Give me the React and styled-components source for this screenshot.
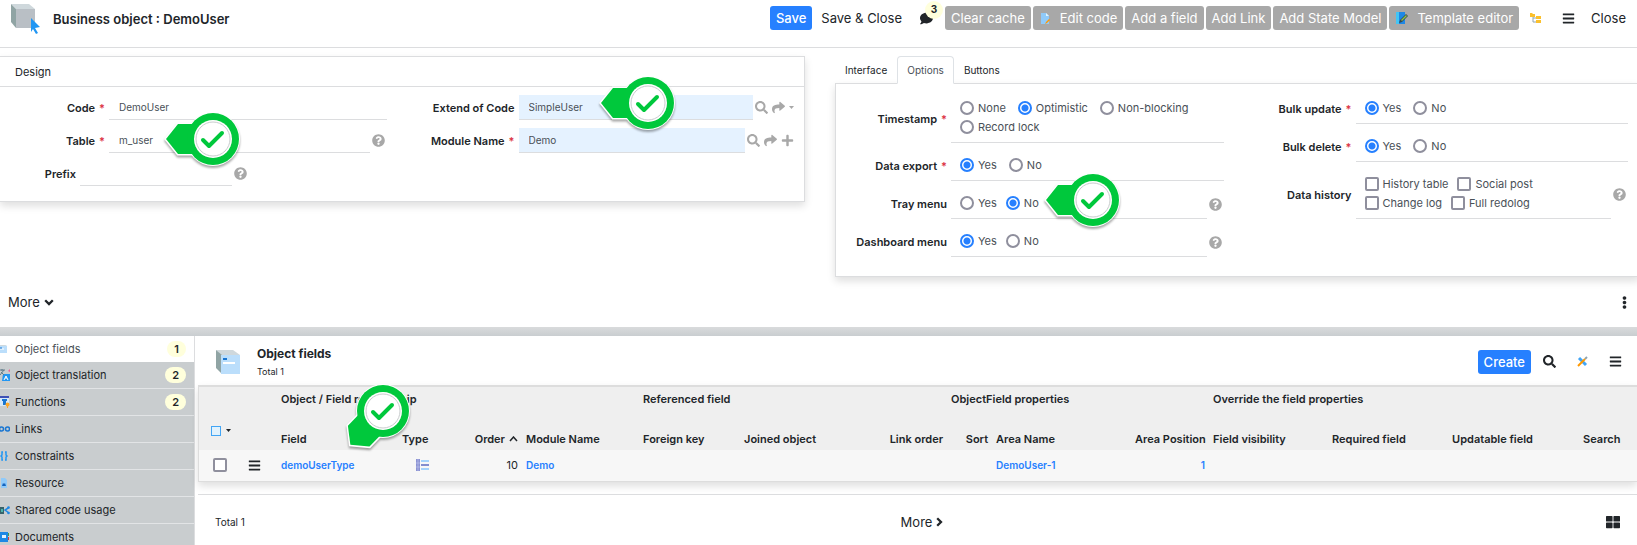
import React, { useState } from "react";
import styled, { createGlobalStyle, css } from "styled-components";
import {
  FaSearch, FaShare, FaPlus, FaQuestionCircle, FaComment,
  FaBars, FaEllipsisV, FaThLarge,
} from "react-icons/fa";

const c = {
  text: "#212529",
  soft: "#495057",
  line: "#dcdddf",
  blue: "#2680ff",
  grey: "#a8a8a8",
  side: "#c9cdcf",
  badge: "#ffffdc",
  pin: "#00c83c",
};

const GlobalStyle = createGlobalStyle`
  *, *::before, *::after { box-sizing: border-box; }
  body { margin: 0; background: #fff; color: ${c.text}; font: 11px/14px Inter, "Liberation Sans", sans-serif; }
  button, input { font: inherit; color: inherit; margin: 0; }
  button { border: 0; padding: 0; background: none; cursor: pointer; }
  a { color: ${c.blue}; text-decoration: none; }
  svg { display: block; flex: none; }
`;

const Page = styled.div`
  display: flex;
  flex-direction: column;
  height: 100vh;
  overflow: hidden;
`;

/* ---------- header ---------- */
const Header = styled.header`
  display: flex;
  align-items: flex-start;
  flex: none;
  height: 48px;
  padding: 4px 5px 0 11px;
  border-bottom: 1px solid ${c.line};
`;
const Title = styled.h1`
  flex: 1;
  margin: 6px 0 0 12px;
  font-size: 13px;
  line-height: 18px;
  font-weight: 600;
`;
const Toolbar = styled.div`
  display: flex;
  align-items: center;
  gap: 2px;
  padding-top: 2px;
`;
const Button = styled.button`
  display: flex;
  align-items: center;
  gap: 9px;
  height: 24px;
  padding: 0 6px;
  border-radius: 3px;
  font-size: 13px;
  white-space: nowrap;
  ${(p) => p.$kind === "primary" && css`background: ${c.blue}; color: #fff; font-weight: 500;`}
  ${(p) => p.$kind === "tool" && css`background: ${c.grey}; color: #fff;`}
`;
const PlainButton = styled(Button)`
  padding: 0 7px;
`;
const ChatButton = styled.button`
  display: flex;
  align-items: center;
  position: relative;
  height: 24px;
  width: 32px;
  padding-left: 9px;
`;
const CountBubble = styled.span`
  position: absolute;
  top: -5px;
  right: 0;
  width: 18px;
  height: 18px;
  border-radius: 9px;
  background: ${c.badge};
  font-size: 10px;
  line-height: 16px;
  font-weight: 700;
  text-align: center;
`;
const IconButton = styled.button`
  display: flex;
  align-items: center;
  justify-content: center;
  width: 30px;
  height: 24px;
`;

/* ---------- form panels ---------- */
const Panels = styled.main`
  display: grid;
  grid-template-columns: 1fr 1fr;
  gap: 30px;
  align-items: start;
  margin: 8px -3px 0 0;
  flex: none;
`;
const Card = styled.section`
  border: 1px solid ${c.line};
  border-left-width: ${(p) => (p.$flush ? 0 : 1)}px;
  box-shadow: 0 4px 8px rgba(0, 0, 0, 0.13);
`;
const CardTitle = styled.h2`
  margin: 0;
  padding: 8px 15px 7px;
  border-bottom: 1px solid ${c.line};
  font-size: 11px;
  font-weight: 400;
`;
const Fields = styled.div`
  display: grid;
  grid-template-columns: 1fr 1fr;
  column-gap: ${(p) => p.$gap}px;
  padding: ${(p) => p.$pad};
`;
const Column = styled.div`
  display: flex;
  flex-direction: column;
  gap: 8px;
`;
const Row = styled.div`
  display: flex;
  align-items: center;
  gap: 4px;
  width: ${(p) => p.$width || "auto"};
`;
const labelStyle = css`
  flex: none;
  width: ${(p) => p.$width}px;
  font-weight: 600;
  text-align: right;
  white-space: nowrap;
`;
const Label = styled.label`${labelStyle}`;
const GroupLabel = styled.span`${labelStyle}`;
const Required = styled.span`
  margin-left: 4px;
  color: #dc3545;
`;
const Control = styled.div`
  display: flex;
  align-items: center;
  position: relative;
  flex: 1;
  min-width: 0;
`;
const TextInput = styled.input`
  flex: 1;
  min-width: 0;
  height: 25px;
  padding: 0 10px;
  border: 0;
  border-bottom: 1px solid ${c.line};
  border-radius: 0;
  outline: 0;
  font-size: 10px;
  color: ${c.soft};
  background: ${(p) => (p.$linked ? "#e5f2ff" : "transparent")};
`;
const FieldAction = styled.button`
  display: flex;
  align-items: center;
  flex: none;
  padding: 0 2px;
  color: ${c.grey};
`;
const Choices = styled.div`
  display: flex;
  flex-direction: column;
  flex: 1;
  padding: 4px 0 6px 9px;
  border-bottom: 1px solid ${c.line};
`;
const ChoiceLine = styled.div`
  display: flex;
  gap: ${(p) => p.$gap}px;
  height: 19px;
`;
const Choice = styled.label`
  display: flex;
  align-items: center;
  gap: 4px;
  color: ${c.soft};
  white-space: nowrap;
`;
const boxStyle = css`
  appearance: none;
  flex: none;
  width: 14px;
  height: 14px;
  border: 2px solid #8f8f9d;
  background: #fff;
`;
const Radio = styled.input`
  ${boxStyle}
  border-radius: 50%;
  &:checked {
    border-color: ${c.blue};
    background: radial-gradient(circle, ${c.blue} 3px, #fff 4px);
  }
`;
const Checkbox = styled.input`
  ${boxStyle}
  border-radius: 2px;
  &:checked { background: ${c.blue}; }
`;
const Tabs = styled.div`
  display: flex;
  height: 27px;
  font-size: 10px;
`;
const Tab = styled.button`
  padding: 0 9px;
  border: 1px solid transparent;
  ${(p) => p.$active && css`
    position: relative;
    height: 28px;
    border-color: #dee2e6 #dee2e6 #fff;
    border-radius: 4px 4px 0 0;
    background: #fff;
    color: ${c.soft};
  `}
`;
const PinSvg = styled.svg`
  position: absolute;
  z-index: 2;
  left: ${(p) => p.$x}px;
  top: ${(p) => p.$y}px;
  margin: -50px 0 0 -50px;
  pointer-events: none;
  filter: drop-shadow(0 2px 1px rgba(0, 0, 0, 0.35));
`;

const MoreBar = styled.div`
  display: flex;
  align-items: center;
  justify-content: space-between;
  flex: none;
  height: 50px;
  padding: 0 6px 0 1px;
`;
const MoreButton = styled(PlainButton)`
  gap: 4px;
`;
const Splitter = styled.div`
  flex: none;
  height: 9px;
  background: linear-gradient(#d9dbdc, #c9cdd0);
`;

/* ---------- lower area ---------- */
const Lower = styled.div`
  display: flex;
  flex: 1;
  min-height: 0;
`;
const Sidebar = styled.nav`
  flex: none;
  width: 195px;
  border-right: 1px solid ${c.line};
  background: ${c.side};
  overflow: hidden;
`;
const SideLink = styled.a`
  display: flex;
  align-items: center;
  gap: 5px;
  height: ${(p) => (p.$active ? 26 : 27)}px;
  padding-right: 8px;
  border-bottom: ${(p) => (p.$active ? 0 : 1)}px solid #e2e4e6;
  background: ${(p) => (p.$active ? "#fff" : c.side)};
  color: ${(p) => (p.$active ? c.soft : c.text)};
`;
const SideText = styled.span`
  flex: 1;
`;
const Badge = styled.span`
  padding: 0 7px;
  border-radius: 8px;
  background: ${c.badge};
  color: ${c.text};
  line-height: 16px;
  font-weight: 600;
`;
const List = styled.section`
  flex: 1;
  min-width: 0;
  padding-left: 3px;
`;
const ListHeader = styled.header`
  display: flex;
  align-items: center;
  height: 49px;
  padding: 2px 7px 0 18px;
`;
const ListTitle = styled.div`
  flex: 1;
  padding: 1px 0 0 17px;
`;
const ListName = styled.h2`
  margin: 0;
  font-size: 12px;
  line-height: 18px;
  font-weight: 700;
`;
const ListTotal = styled.div`
  padding-top: 2px;
  font-size: 9px;
  line-height: 14px;
`;
const ListActions = styled.div`
  display: flex;
  gap: 3px;
`;
const TableFrame = styled.div`
  border: solid #dddddd;
  border-width: 2px 0 1px 1px;
  box-shadow: 0 4px 8px rgba(0, 0, 0, 0.13);
`;
const Table = styled.table`
  width: 100%;
  table-layout: fixed;
  border-collapse: collapse;
  white-space: nowrap;
`;
const HeadRow = styled.tr`
  height: ${(p) => p.$height}px;
  background: #efefef;
`;
const Th = styled.th`
  position: relative;
  padding: 0 4px ${(p) => (p.$low ? 4 : 0)}px;
  vertical-align: ${(p) => (p.$low ? "bottom" : "middle")};
  text-align: ${(p) => p.$align || "left"};
  font-weight: 600;
`;
const BodyRow = styled.tr`
  height: 31px;
  background: #f7f7f7;
`;
const Td = styled.td`
  padding: 0 4px 1px;
  text-align: ${(p) => p.$align || "left"};
`;
const CellLink = styled.a`
  font-size: 10px;
  font-weight: 600;
`;
const SortLabel = styled.span`
  display: flex;
  justify-content: flex-end;
  align-items: center;
  gap: 4px;
`;
const SelectAll = styled.button`
  display: flex;
  align-items: center;
  gap: 5px;
  padding-left: 8px;
`;
const SelectSquare = styled.span`
  width: 10px;
  height: 10px;
  border: 1px solid #42a5f5;
  background: #e1f2fd;
`;
const CellIcon = styled.span`
  display: flex;
  justify-content: center;
`;
const RowMenu = styled.button`
  display: block;
  padding: 0 4px;
`;
const RowCheck = styled(Checkbox)`
  display: block;
  margin-left: 10px;
`;
const ListFooter = styled.footer`
  display: grid;
  grid-template-columns: 1fr auto 1fr;
  align-items: center;
  margin-top: 12px;
  padding: 15px 8px 0 17px;
  border-top: 1px solid ${c.line};
`;
const FooterTotal = styled.span`
  font-size: 10px;
`;
const FooterEnd = styled.div`
  display: flex;
  justify-content: flex-end;
  padding-right: 9px;
`;

/* ---------- drawings ---------- */
const CubeCursor = () => (
  <svg width="30" height="30" viewBox="0 0 30 30" aria-hidden="true">
    <path d="M0 0h18l6 5H5z" fill="#cfd8dc" />
    <path d="M0 0l5 5v19l-5-6z" fill="#90a4a4" />
    <path d="M5 5h19v19H5z" fill="#b9bfc5" />
    <path d="M20 14l9 9-5 1 3 5-2 1-3-5-2 3z" fill="#2196f3" />
  </svg>
);
const CubeField = () => (
  <svg width="24" height="24" viewBox="0 0 24 24" aria-hidden="true">
    <path d="M0 0h17l7 5H5z" fill="#cfd8dc" />
    <path d="M0 0l6 5v19l-6-6z" fill="#90a4a4" />
    <path d="M5 5h19v19H5z" fill="#bbdefb" />
    <path d="M7 8h4v2H7z" fill="#1976d2" />
    <path d="M7 12h12v2H7z" fill="#fff" />
  </svg>
);
const EditDoc = () => (
  <svg width="12" height="12" viewBox="0 0 12 12" aria-hidden="true">
    <path d="M2 1h5l3 3v8H2z" fill="#90caf9" />
    <path d="M7 1l3 3H7z" fill="#e1f5fe" />
    <path d="M6 12l1-2 3-3 1 1-3 3z" fill="#ff9800" />
  </svg>
);
const TemplateDoc = () => (
  <svg width="13" height="12" viewBox="0 0 13 12" aria-hidden="true">
    <path d="M1 0h4v12H1z" fill="#42c5f5" />
    <path d="M4 0h6v12H4z" fill="#1e88e5" />
    <path d="M4 11l1-3 6-6 2 2-6 6z" fill="#37474f" />
    <path d="M6 8l5-5 1 1-5 5z" fill="#8bc34a" />
  </svg>
);
const TreeIcon = () => (
  <svg width="12" height="12" viewBox="0 0 12 12" aria-hidden="true">
    <path d="M3 3v7h4M3 6h4" fill="none" stroke="#90a4ae" />
    <path d="M0 1h2l1 1h2v3H0zM6 4h5v3H6zM6 8h5v3H6z" fill="#fbc02d" />
  </svg>
);
const ToolsIcon = () => (
  <svg width="11" height="11" viewBox="0 0 11 11" aria-hidden="true">
    <path d="M2 2l7 7" stroke="#42a5f5" strokeWidth="3" />
    <path d="M1 10l7-7" stroke="#ff9800" strokeWidth="2" />
    <path d="M8 3l2-2" stroke="#90a4ae" strokeWidth="2" />
  </svg>
);
const EnumIcon = () => (
  <svg width="13" height="12" viewBox="0 0 13 12" aria-hidden="true">
    <path d="M0 0h4v12H0z" fill="#8c93d3" />
    <path d="M0 4h4M0 8h4M2 0v12" stroke="#c5caf0" strokeWidth="0.600" />
    <path d="M5 2h8M5 10h8" stroke="#a5d3fb" strokeWidth="2" />
    <path d="M5 6h8" stroke="#5c6bc0" strokeWidth="1.500" />
  </svg>
);
const SortUp = () => (
  <svg width="9" height="6" viewBox="0 0 9 6" aria-hidden="true">
    <path d="M1 5l3.500-4L8 5" fill="none" stroke={c.text} strokeWidth="1.500" />
  </svg>
);
const Caret = () => (
  <svg width="5" height="3" viewBox="0 0 5 3" aria-hidden="true">
    <path d="M0 0h5L2.500 3z" fill="currentColor" />
  </svg>
);
const ChevronDown = () => (
  <svg width="10" height="7" viewBox="0 0 10 7" aria-hidden="true">
    <path d="M1.200 1.200L5 5l3.800-3.800" fill="none" stroke="currentColor" strokeWidth="2.300" />
  </svg>
);
const ChevronRight = () => (
  <svg width="7" height="10" viewBox="0 0 7 10" aria-hidden="true">
    <path d="M1.200 1.200L5 5L1.200 8.800" fill="none" stroke="currentColor" strokeWidth="2.300" />
  </svg>
);

const sideArt = {
  fields: <><path d="M0 2h5l2 1v7H0z" fill="#bbdefb" /><path d="M0 2h5l2 1H0z" fill="#cfd8dc" /><path d="M0 6h4" stroke="#fff" /><path d="M0 5h2" stroke="#1976d2" /></>,
  translate: <><path d="M3 5h7v7H2z" fill="#2196f3" /><path d="M0 1h5M2 0v2M4 1L0 6M1 3l3 3" fill="none" stroke="#607d8b" /><path d="M4 11l2-4 2 4M5 9h2" fill="none" stroke="#fff" /><path d="M8 2l2-2v3" fill="#f06292" /></>,
  functions: <><path d="M0 1h9" stroke="#3f51b5" strokeWidth="2" /><path d="M0 2h9v8H0z" fill="#d6e9fa" /><path d="M2 4h5M3 6h3M3 8h3" stroke="#1976d2" strokeWidth="2" /><circle cx="7.500" cy="8.500" r="2" fill="#ffa726" /><path d="M7 9h1v3H7z" fill="#ffa726" /></>,
  links: <><circle cx="1.500" cy="6" r="2" fill="none" stroke="#1976d2" strokeWidth="1.500" /><circle cx="7.500" cy="6" r="2" fill="none" stroke="#1976d2" strokeWidth="1.500" /></>,
  constraints: <path d="M3 2H2v3L1 6l1 1v3h1M5 2h1v3l1 1-1 1v3H5" fill="none" stroke="#2196f3" strokeWidth="1.500" />,
  resource: <><path d="M1 1h4l2 2v8H1z" fill="#90caf9" /><path d="M2 9l1-3 1 1 1-1 1 3z" fill="#1565c0" /></>,
  shared: <><path d="M0 3h4v7H0z" fill="#37636b" /><path d="M1 5h2v3H1z" fill="#4db6ac" /><path d="M9 3.500L5 6l4 3" fill="none" stroke="#1e88e5" strokeWidth="1.500" /><circle cx="8.500" cy="3.500" r="1.300" fill="#1e88e5" /><circle cx="8.500" cy="9" r="1.300" fill="#1e88e5" /></>,
  documents: <><path d="M0 1h8v10H0z" fill="#1e88e5" /><path d="M2 4h4v3H2z" fill="#e3f2fd" /><path d="M8 2h1v3H8z" fill="#43a047" /><path d="M8 6h1v3H8z" fill="#e53935" /></>,
};

const Pin = ({ x, y, turn = 0 }) => {
  const pointer = "M-47 0L-35-15H0V15H-35z";
  return (
    <PinSvg $x={x} $y={y} width="100" height="100" viewBox="-50 -50 100 100" aria-hidden="true">
      <g transform={`rotate(${turn})`}>
        <path d={pointer} fill="#fff" stroke="#fff" strokeWidth="3" />
      </g>
      <circle r="27" fill="#fff" />
      <g transform={`rotate(${turn})`}>
        <path d={pointer} fill={c.pin} />
      </g>
      <circle r="26" fill={c.pin} />
      <circle r="19" fill="#fff" />
      <circle r="17" fill="none" stroke="#c8cccd" />
      <path d="M-10 1L-4 7L9-6" fill="none" stroke={c.pin} strokeWidth="4" strokeLinecap="round" strokeLinejoin="round" />
    </PinSvg>
  );
};

/* ---------- composed parts ---------- */
const Help = () => (
  <FieldAction type="button" aria-label="Help"><FaQuestionCircle size={13} /></FieldAction>
);

function TextField({ id, label, value = "", required, linked, labelWidth = 105, width, actions, pin }) {
  return (
    <Row $width={width}>
      <Label htmlFor={id} $width={labelWidth}>{label}{required && <Required>*</Required>}</Label>
      <Control>
        <TextInput id={id} defaultValue={value} $linked={linked} />
        {actions}
        {pin}
      </Control>
    </Row>
  );
}

function RadioField({ name, label, required, lines = [["Yes", "No"]], initial, help, pin, labelWidth = 111 }) {
  const [value, setValue] = useState(initial);
  return (
    <Row role="radiogroup" aria-labelledby={`${name}-label`}>
      <GroupLabel id={`${name}-label`} $width={labelWidth}>{label}{required && <Required>*</Required>}</GroupLabel>
      <Control>
        <Choices>
          {lines.map((line) => (
            <ChoiceLine key={line[0]} $gap={required ? 12 : 9}>
              {line.map((o) => (
                <Choice key={o}>
                  <Radio type="radio" name={name} checked={value === o} onChange={() => setValue(o)} />
                  {o}
                </Choice>
              ))}
            </ChoiceLine>
          ))}
        </Choices>
        {help && <Help />}
        {pin}
      </Control>
    </Row>
  );
}

const sideItems = [
  ["fields", "Object fields", 1],
  ["translate", "Object translation", 2],
  ["functions", "Functions", 2],
  ["links", "Links"],
  ["constraints", "Constraints"],
  ["resource", "Resource"],
  ["shared", "Shared code usage"],
  ["documents", "Documents"],
];
const columnWidths = [41, 37, 121, 49, 75, 117, 101, 145, 62, 45, 139, 78, 119, 120, 131, 58];

export default function App() {
  return (
    <>
      <GlobalStyle />
      <Page>
        <Header>
          <CubeCursor />
          <Title>Business object : DemoUser</Title>
          <Toolbar>
            <Button type="button" $kind="primary">Save</Button>
            <PlainButton type="button">Save &amp; Close</PlainButton>
            <ChatButton type="button" aria-label="Comments">
              <FaComment size={13} />
              <CountBubble>3</CountBubble>
            </ChatButton>
            <Button type="button" $kind="tool">Clear cache</Button>
            <Button type="button" $kind="tool"><EditDoc />Edit code</Button>
            <Button type="button" $kind="tool">Add a field</Button>
            <Button type="button" $kind="tool">Add Link</Button>
            <Button type="button" $kind="tool">Add State Model</Button>
            <Button type="button" $kind="tool"><TemplateDoc />Template editor</Button>
            <IconButton type="button" aria-label="Tree view"><TreeIcon /></IconButton>
            <IconButton type="button" aria-label="Menu"><FaBars size={13} /></IconButton>
            <Button type="button">Close</Button>
          </Toolbar>
        </Header>

        <Panels>
          <Card $flush>
            <CardTitle>Design</CardTitle>
            <Fields $gap={23} $pad="8px 8px 15px 0">
              <Column>
                <TextField id="code" label="Code" value="DemoUser" required />
                <TextField id="table" label="Table" value="m_user" required actions={<Help />} pin={<Pin x={104} y={11} />} />
                <TextField id="prefix" label="Prefix" labelWidth={76} width="249px" actions={<Help />} />
              </Column>
              <Column>
                <TextField id="extend" label="Extend of Code" value="SimpleUser" linked pin={<Pin x={129} y={8} />}
                  actions={<>
                    <FieldAction type="button" aria-label="Search"><FaSearch size={13} /></FieldAction>
                    <FieldAction type="button" aria-label="Open"><FaShare size={13} /></FieldAction>
                    <FieldAction type="button" aria-label="More actions"><Caret /></FieldAction>
                  </>} />
                <TextField id="module" label="Module Name" value="Demo" required linked
                  actions={<>
                    <FieldAction type="button" aria-label="Search"><FaSearch size={13} /></FieldAction>
                    <FieldAction type="button" aria-label="Open"><FaShare size={13} /></FieldAction>
                    <FieldAction type="button" aria-label="Add"><FaPlus size={13} /></FieldAction>
                  </>} />
              </Column>
            </Fields>
          </Card>

          <div>
            <Tabs role="tablist">
              <Tab type="button" role="tab">Interface</Tab>
              <Tab type="button" role="tab" aria-selected="true" $active>Options</Tab>
              <Tab type="button" role="tab">Buttons</Tab>
            </Tabs>
            <Card>
              <Fields $gap={17} $pad="10px 11px 19px 0">
                <Column>
                  <RadioField name="timestamp" label="Timestamp" required initial="Optimistic"
                    lines={[["None", "Optimistic", "Non-blocking"], ["Record lock"]]} />
                  <RadioField name="export" label="Data export" required initial="Yes" />
                  <RadioField name="tray" label="Tray menu" initial="No" help pin={<Pin x={142} y={11} />} />
                  <RadioField name="dashboard" label="Dashboard menu" initial="Yes" help />
                </Column>
                <Column>
                  <RadioField name="update" label="Bulk update" required initial="Yes" />
                  <RadioField name="delete" label="Bulk delete" required initial="Yes" />
                  <Row role="group" aria-labelledby="history-label">
                    <GroupLabel id="history-label" $width={111}>Data history</GroupLabel>
                    <Control>
                      <Choices>
                        <ChoiceLine $gap={9}>
                          <Choice><Checkbox type="checkbox" />History table</Choice>
                          <Choice><Checkbox type="checkbox" />Social post</Choice>
                        </ChoiceLine>
                        <ChoiceLine $gap={9}>
                          <Choice><Checkbox type="checkbox" />Change log</Choice>
                          <Choice><Checkbox type="checkbox" />Full redolog</Choice>
                        </ChoiceLine>
                      </Choices>
                      <Help />
                    </Control>
                  </Row>
                </Column>
              </Fields>
            </Card>
          </div>
        </Panels>

        <MoreBar>
          <MoreButton type="button">More <ChevronDown /></MoreButton>
          <button type="button" aria-label="More options"><FaEllipsisV size={13} /></button>
        </MoreBar>
        <Splitter />

        <Lower>
          <Sidebar>
            {sideItems.map(([art, label, count], i) => (
              <SideLink key={art} href={`#${art}`} $active={i === 0}>
                <svg width="10" height="12" viewBox="0 0 10 12" aria-hidden="true">{sideArt[art]}</svg>
                <SideText>{label}</SideText>
                {count && <Badge>{count}</Badge>}
              </SideLink>
            ))}
          </Sidebar>
          <List>
            <ListHeader>
              <CubeField />
              <ListTitle>
                <ListName>Object fields</ListName>
                <ListTotal>Total 1</ListTotal>
              </ListTitle>
              <ListActions>
                <Button type="button" $kind="primary">Create</Button>
                <IconButton type="button" aria-label="Search"><FaSearch size={13} /></IconButton>
                <IconButton type="button" aria-label="Tools"><ToolsIcon /></IconButton>
                <IconButton type="button" aria-label="Menu"><FaBars size={13} /></IconButton>
              </ListActions>
            </ListHeader>
            <TableFrame>
              <Table>
                <colgroup>
                  {columnWidths.map((w, i) => <col key={i} width={w} />)}
                </colgroup>
                <thead>
                  <HeadRow $height={24}>
                    <Th colSpan={2} />
                    <Th colSpan={4}>Object / Field relationship<Pin x={106} y={24} turn={-46} /></Th>
                    <Th colSpan={3}>Referenced field</Th>
                    <Th colSpan={3}>ObjectField properties</Th>
                    <Th colSpan={4}>Override the field properties</Th>
                  </HeadRow>
                  <HeadRow $height={39}>
                    <Th>
                      <SelectAll type="button" aria-label="Select rows">
                        <SelectSquare /><Caret />
                      </SelectAll>
                    </Th>
                    <Th />
                    <Th $low>Field</Th>
                    <Th $low>Type</Th>
                    <Th $low><SortLabel>Order <SortUp /></SortLabel></Th>
                    <Th $low>Module Name</Th>
                    <Th $low>Foreign key</Th>
                    <Th $low>Joined object</Th>
                    <Th $low $align="right">Link order</Th>
                    <Th $low $align="right">Sort</Th>
                    <Th $low>Area Name</Th>
                    <Th $low $align="right">Area Position</Th>
                    <Th $low>Field visibility</Th>
                    <Th $low>Required field</Th>
                    <Th $low>Updatable field</Th>
                    <Th $low>Search</Th>
                  </HeadRow>
                </thead>
                <tbody>
                  <BodyRow>
                    <Td><RowCheck type="checkbox" aria-label="Select demoUserType" /></Td>
                    <Td><RowMenu type="button" aria-label="Row menu"><FaBars size={13} /></RowMenu></Td>
                    <Td><CellLink href="#demoUserType">demoUserType</CellLink></Td>
                    <Td><CellIcon><EnumIcon /></CellIcon></Td>
                    <Td $align="right">10</Td>
                    <Td><CellLink href="#Demo">Demo</CellLink></Td>
                    <Td colSpan={4} />
                    <Td><CellLink href="#DemoUser-1">DemoUser-1</CellLink></Td>
                    <Td $align="right"><CellLink href="#position">1</CellLink></Td>
                    <Td colSpan={4} />
                  </BodyRow>
                </tbody>
              </Table>
            </TableFrame>
            <ListFooter>
              <FooterTotal>Total 1</FooterTotal>
              <MoreButton type="button">More <ChevronRight /></MoreButton>
              <FooterEnd>
                <button type="button" aria-label="Grid view"><FaThLarge size={14} /></button>
              </FooterEnd>
            </ListFooter>
          </List>
        </Lower>
      </Page>
    </>
  );
}
